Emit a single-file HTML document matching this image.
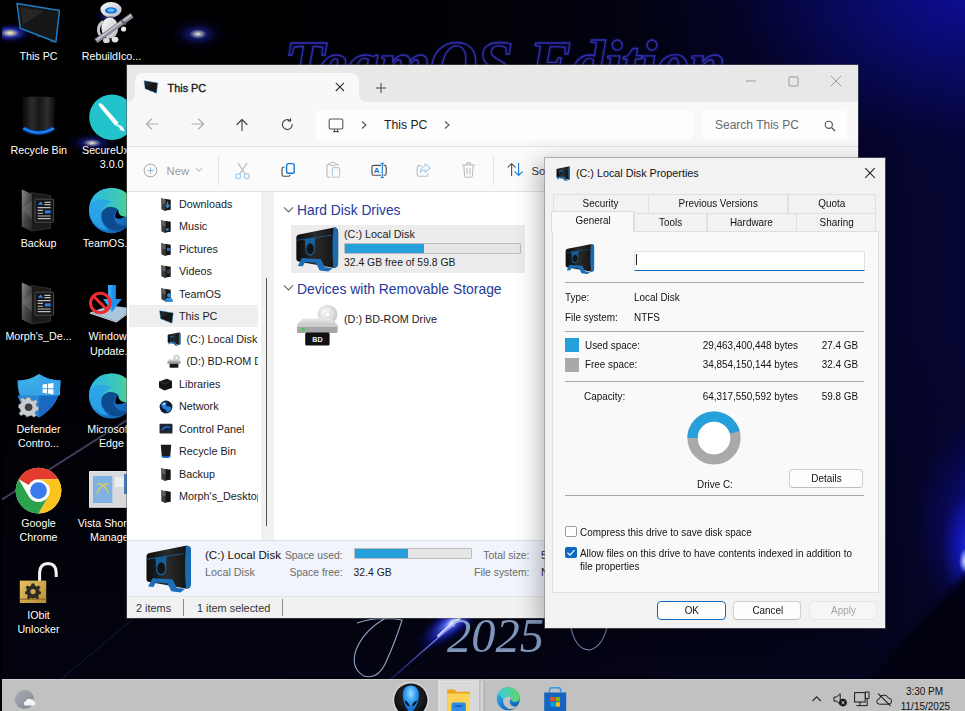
<!DOCTYPE html>
<html lang="en">
<head>
<meta charset="utf-8">
<title>Desktop - This PC - Local Disk Properties</title>
<style>
*{box-sizing:border-box;margin:0;padding:0}
html,body{width:965px;height:711px;overflow:hidden;background:#000}
body{position:relative;font-family:"Liberation Sans",sans-serif;font-size:10.8px;color:#1b1b1b}
.abs{position:absolute}
#wall{position:absolute;left:0;top:0;width:965px;height:711px;overflow:hidden;
 background:
  radial-gradient(ellipse 7px 13px at 966px 561px, rgba(235,240,255,1) 0, rgba(150,170,255,.8) 50%, rgba(60,80,255,0) 100%),
  radial-gradient(ellipse 30px 56px at 972px 548px, rgba(40,55,250,.9) 0, rgba(25,30,220,.6) 45%, rgba(20,20,200,0) 100%),
  radial-gradient(ellipse 92px 140px at 985px 525px, rgba(16,16,185,.85) 0, rgba(10,10,125,.5) 45%, rgba(4,4,60,.18) 75%, rgba(0,0,40,0) 100%),
  radial-gradient(ellipse 340px 210px at 975px -10px, rgba(14,14,160,.95) 0, rgba(10,10,110,.75) 40%, rgba(5,5,60,.35) 72%, rgba(0,0,0,0) 100%),
  linear-gradient(180deg, rgba(4,4,20,0) 0, rgba(4,4,20,0) 45%, rgba(5,5,24,.75) 100%),
  linear-gradient(90deg, #000 0, #010106 50%, #03031a 78%, #060634 100%);
}
/* ---------- desktop icons ---------- */
.dlabel{position:absolute;width:90px;text-align:center;color:#fff;font-size:10.7px;line-height:14.2px;white-space:nowrap;
 text-shadow:0 1px 2px #000,0 0 2px #000,1px 1px 1px #000}
/* ---------- taskbar ---------- */
#taskbar{position:absolute;left:2px;top:679px;width:963px;height:40px;background:#c1c1c1;border-top:1px solid #cfcfcf}
/* ---------- explorer ---------- */
#exp{position:absolute;left:127px;top:65px;width:731px;height:553.2px;background:#fff;overflow:hidden;box-shadow:0 0 0 1px rgba(90,90,90,.55)}
#exp .tabstrip{position:absolute;left:0;top:0;width:731px;height:37px;background:#e8e8e8}
#exp .tab{position:absolute;left:8px;top:8px;width:224px;height:30px;background:#f8f8f8;border-radius:7px 7px 0 0}
#exp .nav{position:absolute;left:0;top:37px;width:731px;height:45px;background:#f8f8f8;border-bottom:1px solid #e3e3e3}
#exp .addr{position:absolute;left:189px;top:8px;width:377px;height:30px;background:#fdfdfd;border-radius:4px}
#exp .search{position:absolute;left:575px;top:8px;width:145px;height:30px;background:#fdfdfd;border-radius:4px}
#exp .cmd{position:absolute;left:0;top:82px;width:731px;height:45px;background:#fbfbfb;border-bottom:1px solid #e3e3e3}
#exp .side{position:absolute;left:0;top:127px;width:133.5px;height:348px;background:#fff;overflow:hidden}
#exp .gutter{position:absolute;left:133.5px;top:127px;width:13.7px;height:348px;background:#f1f1f1;z-index:2}
#exp .thumb{position:absolute;left:139px;top:213px;width:1.4px;height:248px;background:#555;z-index:3}
#exp .main{position:absolute;left:146px;top:127px;width:585px;height:348px;background:#fff}
#exp .details{position:absolute;left:0;top:475px;width:731px;height:57px;background:#f1f4fb;border-top:1px solid #d8e1f0;border-bottom:1px solid #e4e6ea}
#exp .status{position:absolute;left:0;top:532px;width:731px;height:22px;background:#f1f1f1}
.navrow{position:absolute;left:0;width:133.5px;height:22.5px;line-height:22.5px;white-space:nowrap;font-size:10.8px}
.navrow span{position:absolute;left:52px;top:0}
.navrow.sub span{left:59.5px}
.gray{color:#6b6b6b}
/* ---------- dialog ---------- */
#dlg{position:absolute;left:544.5px;top:157.5px;width:340px;height:470px;background:#f2f2f2;font-size:9.9px;color:#111;
 box-shadow:0 0 0 1px rgba(120,120,120,.5),-6px 4px 22px rgba(0,0,0,.28)}
#dlg .page{position:absolute;left:7px;top:73.5px;width:327px;height:362px;background:#f9f9f9;border:1px solid #dfdfdf}
#dlg .tabx{position:absolute;height:19px;background:#f2f2f2;border:1px solid #e0e0e0;border-bottom:none;text-align:center;line-height:17.5px}
#dlg .tabsel{position:absolute;background:#f9f9f9;border:1px solid #dcdcdc;border-bottom:none;text-align:center}
#dlg .sep{position:absolute;left:20px;width:299px;height:1px;background:#a8a8a8}
#dlg .t{position:absolute;white-space:nowrap;line-height:12px;margin-top:-.5px;font-size:10.8px;transform:scaleX(.917);transform-origin:0 50%}
#dlg .sx{display:inline-block;font-size:10.8px;transform:scaleX(.917);transform-origin:50% 50%}
#dlg .r{text-align:right;transform-origin:100% 50%}
#dlg .btn{position:absolute;top:443.5px;height:19px;width:68px;border:1px solid #cfcfcf;border-bottom-color:#bdbdbd;border-radius:4px;background:#fdfdfd;text-align:center;line-height:17.5px;font-size:10.2px}
</style>
</head>
<body>
<div id="wall">
<div class="abs" style="left:-14px;top:22px;width:48px;height:22px;background:radial-gradient(ellipse 50% 50% at 50% 50%,rgba(255,255,225,.95) 0,rgba(255,255,230,.75) 13%,rgba(50,60,230,.7) 38%,rgba(10,10,120,.3) 70%,rgba(0,0,0,0) 100%)"></div>
<div class="abs" style="left:169px;top:18px;width:58px;height:32px;background:radial-gradient(ellipse 50% 50% at 50% 50%,rgba(255,255,230,.95) 0,rgba(235,238,255,.7) 9%,rgba(30,40,190,.5) 30%,rgba(10,10,90,.25) 62%,rgba(0,0,0,0) 100%)"></div>
<div class="abs" style="left:64px;top:131px;width:56px;height:24px;background:radial-gradient(ellipse 50% 50% at 50% 50%,rgba(255,255,240,.95) 0,rgba(235,238,255,.7) 10%,rgba(30,40,190,.5) 32%,rgba(10,10,90,.25) 62%,rgba(0,0,0,0) 100%)"></div>
<div class="abs" style="left:94px;top:10px;width:28px;height:14px;background:radial-gradient(ellipse 50% 50% at 50% 50%,rgba(80,90,240,.55) 0,rgba(10,10,120,.25) 60%,rgba(0,0,0,0) 100%)"></div>
<div class="abs" style="left:284px;top:31px;font-family:'Liberation Serif',serif;font-style:italic;font-weight:bold;font-size:67px;line-height:67px;letter-spacing:-1.2px;white-space:nowrap;color:transparent;-webkit-text-stroke:1.3px #3030b0;filter:drop-shadow(0 0 1.2px rgba(50,50,220,.55))">TeamOS Edition</div>
<svg class="abs" style="left:0;top:600px" width="965" height="90" viewBox="0 600 965 90">
 <defs>
  <linearGradient id="gstreak" x1="1" y1="0" x2="0" y2="1"><stop offset="0" stop-color="#fff"/><stop offset=".25" stop-color="#8a90ff"/><stop offset="1" stop-color="#2a2ab0" stop-opacity=".5"/></linearGradient>
  <radialGradient id="gglow"><stop offset="0" stop-color="#e8ecff"/><stop offset=".2" stop-color="#5a6cff" stop-opacity=".9"/><stop offset=".55" stop-color="#1a22c8" stop-opacity=".55"/><stop offset="1" stop-color="#000040" stop-opacity="0"/></radialGradient>
 </defs>
 <ellipse cx="452" cy="622" rx="46" ry="17" fill="url(#gglow)" transform="rotate(-38 452 622)"/>
 <path d="M463,616 L391,679" stroke="url(#gstreak)" stroke-width="1.6" fill="none"/>
 <path d="M462,616 Q450,624 438,636" stroke="#eef0ff" stroke-width="1.8" fill="none" opacity=".85" stroke-linecap="round"/>
 <path d="M357,623 Q378,616 402,620 Q396,640 386,662 Q378,680 364,676 Q350,668 356,650 Q364,630 386,618" stroke="#9fb4d8" stroke-width="1.1" fill="none" opacity=".9"/>
 <path d="M570,622 Q574,650 590,650 Q604,646 608,622" stroke="#8fa6cf" stroke-width="1.1" fill="none" opacity=".85"/>
 <path d="M52,687 L140,613" stroke="#15154a" stroke-width="1" fill="none"/>
 <text x="447" y="652" font-family="Liberation Serif,serif" font-style="italic" font-size="48.5" fill="#9dbbe4" opacity=".8">2025</text>
</svg>
<svg class="abs" style="left:0;top:300px" width="260" height="260" viewBox="0 300 260 260"><path d="M0,500.8 L128,419.5" stroke="#2c2c50" stroke-width="3" opacity=".5" fill="none"/><path d="M0,500.8 L128,419.5" stroke="#8c8cac" stroke-width="1" opacity=".6" fill="none"/></svg>

<svg class="abs" style="left:820px;top:540px" width="145" height="140" viewBox="820 540 145 140"><defs><filter id="fb" x="-20%" y="-20%" width="140%" height="140%"><feGaussianBlur stdDeviation="3"/></filter></defs><polygon points="972,566 972,690 860,690 878,672" fill="#02020b" opacity=".93" filter="url(#fb)"/></svg>

</div>

<svg class="abs" style="left:0;top:0" width="142" height="640" viewBox="0 0 142 640">
 <defs>
  <linearGradient id="gbin" x1="0" y1="0" x2="1" y2="0"><stop offset="0" stop-color="#050505"/><stop offset=".3" stop-color="#2c2c2c"/><stop offset=".5" stop-color="#161616"/><stop offset=".75" stop-color="#2e2e2e"/><stop offset="1" stop-color="#060606"/></linearGradient>
  <linearGradient id="gfold" x1="0" y1="0" x2="1" y2="1"><stop offset="0" stop-color="#8a8a8a"/><stop offset=".5" stop-color="#4a4a4a"/><stop offset="1" stop-color="#262626"/></linearGradient>
  <linearGradient id="gedgeA" x1="0" y1="0" x2="1" y2="1"><stop offset="0" stop-color="#36c3f2"/><stop offset=".5" stop-color="#1d84dc"/><stop offset="1" stop-color="#0b4f9a"/></linearGradient>
  <linearGradient id="gedgeB" x1="0" y1="0" x2="1" y2="0"><stop offset="0" stop-color="#2cb9e6"/><stop offset=".7" stop-color="#41c9b0"/><stop offset="1" stop-color="#63d75e"/></linearGradient>
  <linearGradient id="grobot" x1="0" y1="0" x2="1" y2="1"><stop offset="0" stop-color="#ffffff"/><stop offset="1" stop-color="#b6b8bc"/></linearGradient>
  <linearGradient id="gshieldL" x1="0" y1="0" x2="0" y2="1"><stop offset="0" stop-color="#3fb4ec"/><stop offset="1" stop-color="#2a8fd8"/></linearGradient>
  <linearGradient id="ggold" x1="0" y1="0" x2="1" y2="1"><stop offset="0" stop-color="#e6c067"/><stop offset="1" stop-color="#b98d32"/></linearGradient>
  <g id="dfolder">
   <path d="M31,3.5 L50.5,6.5 L50.5,39.5 L31,42 Z" fill="#1b1b1b" stroke="#3a3a3a" stroke-width=".7"/>
   <path d="M21.8,0.6 L31.8,5 L31.8,42.6 L21.8,37.6 Z" fill="url(#gfold)"/>
   <path d="M21.8,20 L31.8,12 L31.8,30 Z" fill="#9a9a9a" opacity=".25"/>
   <rect x="35" y="10.2" width="18.6" height="23" rx="1" fill="#161616" stroke="#5a5a5a" stroke-width=".8"/>
   <path d="M38,15.8 L40.6,12.4 L43.2,15.8 Z" fill="#3a8de6"/>
   <path d="M44.4,13.4 H50.6 M44.4,15.6 H50.6 M37.6,18.6 H50.6 M37.6,21.4 H43 M37.6,24.2 H43 M37.6,27 H50.6 M37.6,29.6 H50.6" stroke="#bdbdbd" stroke-width="1.1"/>
   <rect x="44.8" y="21.4" width="5.8" height="3" fill="#2f7fe0"/>
  </g>
  <g id="dedge">
   <circle cx="0" cy="0" r="22.6" fill="url(#gedgeA)"/>
   <path d="M-21.8,-6 Q-17.6,-22 0,-22.6 Q18,-22.4 22.2,-4.4 Q23.4,5.6 12.6,6.4 Q4,6 6,-1.2 Q-4.6,-6.6 -10,2.4 Q-16,-11 -21.8,-6 Z" fill="url(#gedgeB)"/>
   <path d="M-21.8,-6 Q-12,-15 0,-8.6 Q-8,-5.6 -10.2,2.6 Q-12,12 -3,19.6 Q-14,19 -19.6,8.6 Q-23.6,1.6 -21.8,-6 Z" fill="#2aa5e6" opacity=".85"/>
   <path d="M6.4,-1.4 Q-3.4,-7.6 -9.8,1.6 Q-12.2,12.4 -1.2,19 Q8.6,22.6 17.2,15 Q5.8,17 2.8,8.4 Q2,2.6 6.4,-1.4 Z" fill="#0d4a8e"/>
   <path d="M6.6,-1.2 Q3,2.6 4,7.4 Q8,9.6 14,6 Q7,6.4 6.6,-1.2 Z" fill="#000" />
  </g>
 </defs>
 <!-- This PC -->
 <use href="#mon" x="14" y="1" width="46" height="44"/>
 <!-- robot -->
 <g>
  <ellipse cx="111" cy="9.6" rx="10.6" ry="7.6" fill="url(#grobot)"/>
  <ellipse cx="111" cy="10.4" rx="6" ry="3.2" fill="#1273e0"/><ellipse cx="111" cy="10.2" rx="3.4" ry="1.6" fill="#59c2ff"/>
  <rect x="108.4" y="16.4" width="5" height="3" fill="#5a5d66"/>
  <ellipse cx="109.8" cy="28" rx="8.4" ry="10.6" fill="url(#grobot)"/>
  <path d="M102.4,22 Q96.4,27 99.4,34" stroke="#c4c6ca" stroke-width="3" fill="none" stroke-linecap="round"/>
  <ellipse cx="106.4" cy="40.4" rx="3.4" ry="2.6" fill="#d6d8dc"/><ellipse cx="115" cy="39.6" rx="3.4" ry="2.8" fill="#e4e6e9"/>
  <path d="M96,41 L132,15.4" stroke="#8c8c98" stroke-width="5.2" stroke-linecap="butt"/>
  <path d="M96.6,39.8 L131.4,14.8" stroke="#c9c9d4" stroke-width="1.6"/>
  <path d="M121.4,20.4 L126,24.6" stroke="#5b5b66" stroke-width="2"/>
  <circle cx="123.6" cy="29" r="2.6" fill="#e8e9ec"/>
 </g>
 <!-- Recycle bin -->
 <path d="M21.8,97.6 Q38.8,95.4 55.9,97.6 L53.7,129.6 Q38.6,136.2 23.4,129.6 Z" fill="url(#gbin)"/>
 <path d="M23.6,128.4 Q38.6,137.4 53.6,128.4" stroke="#0a3c8c" stroke-width="5" fill="none" opacity=".75"/>
 <path d="M24,128.6 Q38.6,136.8 53.2,128.6" stroke="#1789ff" stroke-width="2.3" fill="none" stroke-linecap="round"/>
 <!-- SecureUx -->
 <circle cx="112" cy="117.2" r="22.8" fill="#22c3cb"/>
 <path d="M99,103.2 Q100.8,102.8 102.6,104.6 L118.6,122.8 L115.4,125.8 L99.6,106.8 Q98,104.6 99,103.2 Z" fill="#fff"/>
 <path d="M118.2,124.8 Q123.4,125.4 124.6,131.4 Q119,131 118.2,124.8 Z" fill="#fff"/>
 <path d="M116.4,124.4 L118.8,126.2" stroke="#e9f7f8" stroke-width="2"/>
 <!-- Backup folder -->
 <use href="#dfolder" x="0" y="189"/>
 <!-- TeamOS edge -->
 <use href="#dedge" x="111.5" y="210.6"/>
 <!-- Morph's folder -->
 <use href="#dfolder" x="0" y="282"/>
 <!-- Windows Update blocker -->
 <path d="M89.8,312.4 L110,305.4 L134,308.4 L116.4,321.4 Z" fill="#a9c5dc"/>
 <path d="M89.8,312.4 L116.4,321.4 L134,308.4 L134,309.6 L116.4,322.6 L89.8,313.6 Z" fill="#dcecf8"/>
 <path d="M108,285 H115.8 V299 H121.8 L112,312 L103.3,299 H108 Z" fill="#1e90ea"/><path d="M108,285 H111.4 V299 L112,312 L103.3,299 H108 Z" fill="#35a8f4"/>
 <circle cx="100.3" cy="303" r="9.8" fill="none" stroke="#ee2a32" stroke-width="3"/>
 <path d="M93.4,296 L107.2,310" stroke="#ee2a32" stroke-width="3"/>
 <!-- Defender -->
 <path d="M39,374 Q48,380 60.4,380.6 Q61,405 39,417.4 Q17,405 17.6,380.6 Q30,380 39,374 Z" fill="url(#gshieldL)"/>
 <path d="M39,374 Q48,380 60.4,380.6 Q61,405 39,417.4 Z" fill="#1868c4"/>
 <path d="M39,374 Q48,380 60.4,380.6 L60,395.6 H39 Z" fill="#3aa4ea"/>
 <path d="M17.7,395.6 H39 V417.4 Q19,406 17.7,395.6 Z" fill="#2386d6"/>
 <path d="M42.6,384.6 L47,384 V388.2 H42.6 Z M48,383.8 L53.4,383 V388.2 H48 Z M42.6,389.2 H47 V393.4 L42.6,392.8 Z M48,389.2 H53.4 V394.4 L48,393.6 Z" fill="#fff"/>
 <g transform="translate(28.6 407.2)">
  <path d="M-1.8,-10 H1.8 L2.4,-7.2 L4.6,-6.2 L7,-7.8 L9,-5.4 L7.4,-3 L8.2,-0.8 L10,-0.2 V3.2 L7.4,3.8 L6.4,6 L7.8,8.4 L5.2,10 L3,8.2 L0.6,8.8 L-1.8,10 L-3,8 L-5.4,7.4 L-7.8,8.6 L-9.6,6 L-7.8,4 L-8.6,1.6 L-10,0.6 V-2.6 L-8,-3.4 L-7,-5.6 L-8.4,-7.8 L-6,-9.6 L-4,-8 L-2.4,-8.4 Z" fill="#c9ccd1" stroke="#70747c" stroke-width=".6"/>
  <circle cx="0" cy="0" r="3.8" fill="#3b3e45"/>
 </g>
 <!-- Microsoft Edge -->
 <use href="#dedge" x="111.5" y="396"/>
 <!-- Chrome -->
 <g transform="translate(38.5 490.6)">
  <circle cx="0" cy="0" r="22.8" fill="#fff"/>
  <path d="M-19.75,-11.4 A22.8,22.8 0 0 1 19.75,-11.4 L0,-11.4 A11.4,11.4 0 0 0 -9.87,-5.7 Z" fill="#e33b2e"/>
  <path d="M19.75,-11.4 A22.8,22.8 0 0 1 0,22.8 L9.87,5.7 A11.4,11.4 0 0 0 9.87,-5.7 L0,-11.4 Z" fill="#fcc31e"/>
  <path d="M0,22.8 A22.8,22.8 0 0 1 -19.75,-11.4 L-9.87,5.7 A11.4,11.4 0 0 0 9.87,5.7 Z" fill="#2ba24c"/>
  <circle cx="0" cy="0" r="10.6" fill="#fff"/>
  <circle cx="0" cy="0" r="8.4" fill="#3a7cec"/>
 </g>
 <!-- Vista shortcut manager -->
 <rect x="89.6" y="471.6" width="50" height="35.6" fill="#d7d9dc" stroke="#f2f2f2" stroke-width="1"/>
 <rect x="93" y="476" width="19.4" height="27" fill="#7fb1e3"/>
 <path d="M97,484 Q103,481.6 108.4,493 M108.6,483.6 Q101,484 96.6,493.4" stroke="#e7d34a" stroke-width="1.2" fill="none"/>
 <rect x="115" y="477" width="12" height="10" fill="#eceef0"/>
 <rect x="124" y="474" width="4" height="20" fill="#3c78c8"/>
 <!-- IObit -->
 <path d="M39.6,582 V572.4 Q40,563.6 48,563.4 Q56,563.6 56.2,572.4 V577" stroke="#f4f4f4" stroke-width="3" fill="none"/>
 <rect x="19.8" y="580.6" width="26.4" height="22.4" fill="url(#ggold)"/>
 <rect x="19.8" y="598.6" width="26.4" height="1.2" fill="#8c6a22"/>
 <g transform="translate(33 591.6)">
  <path d="M-1.4,-7.6 H1.4 L2,-5.4 L3.8,-4.6 L5.8,-5.8 L7.4,-3.8 L6,-2 L6.6,0 L8,0.6 V2.6 L6,3.2 L5.2,5 L6.2,6.8 L4,8 L2.4,6.6 L0,7.2 L-2.4,6.6 L-4,8 L-6.2,6.8 L-5.2,5 L-6,3.2 L-8,2.6 V0.6 L-6.6,0 L-6,-2 L-7.4,-3.8 L-5.8,-5.8 L-3.8,-4.6 L-2,-5.4 Z" fill="#2e2a22" transform="translate(0 -0.4)"/>
  <circle cx="0" cy="0" r="2.6" fill="#d0a84f"/>
 </g>
</svg>
<div class="dlabel" style="left:-6.5px;top:48.9px">This PC</div>
<div class="dlabel" style="left:66.5px;top:48.9px">RebuildIco...</div>
<div class="dlabel" style="left:-6.2px;top:143.2px">Recycle Bin</div>
<div class="dlabel" style="left:82px;top:143.2px;text-align:left">SecureUxTh...</div>
<div class="dlabel" style="left:66.7px;top:157px">3.0.0</div>
<div class="dlabel" style="left:-6.5px;top:236px">Backup</div>
<div class="dlabel" style="left:82.7px;top:236px;text-align:left">TeamOS.site</div>
<div class="dlabel" style="left:-6.5px;top:329px">Morph's_De...</div>
<div class="dlabel" style="left:88.6px;top:329px;text-align:left">Windows</div>
<div class="dlabel" style="left:90px;top:343.6px;text-align:left">Update...</div>
<div class="dlabel" style="left:-6.5px;top:421.9px">Defender</div>
<div class="dlabel" style="left:-6.5px;top:436.2px">Contro...</div>
<div class="dlabel" style="left:87.3px;top:421.9px;text-align:left">Microsoft</div>
<div class="dlabel" style="left:66.4px;top:436.2px">Edge</div>
<div class="dlabel" style="left:-6.5px;top:515.6px">Google</div>
<div class="dlabel" style="left:-6.5px;top:529.7px">Chrome</div>
<div class="dlabel" style="left:77.7px;top:515.6px;text-align:left">Vista Shortcut</div>
<div class="dlabel" style="left:90px;top:529.7px;text-align:left">Manager</div>
<div class="dlabel" style="left:-6.5px;top:608.3px">IObit</div>
<div class="dlabel" style="left:-6.5px;top:622.4px">Unlocker</div>


<div id="exp">
<svg width="0" height="0" style="position:absolute">
 <defs>
  <linearGradient id="gDrv" x1="0" y1="0" x2="1" y2="0"><stop offset="0" stop-color="#0c0c0c"/><stop offset=".45" stop-color="#2a2a2a"/><stop offset="1" stop-color="#101010"/></linearGradient>
  <symbol id="drive" viewBox="5 3 46 49">
   <path d="M6,15.5 Q6,12.6 9,12 L45,4.8 Q50.5,4 50.5,10 L50.5,42 Q50.5,48.3 45,47.5 L9,41 Q6,40.5 6,38 Z" fill="url(#gDrv)"/>
   <path d="M45.5,4.7 Q50.5,4 50.5,10 L50.5,42 Q50.5,48.3 45.5,47.6 Q43.5,26 45.5,4.7 Z" fill="#1a6cb2"/>
   <path d="M6,17.8 L43.6,12.2 L43.6,13 L6,18.7 Z" fill="#175f9a"/>
   <path d="M14.6,17 L26.4,15.2 Q25.5,19 25.8,26 Q25.8,34.4 20.6,34.6 Q15.3,34.4 15.5,26 Q15.6,20 14.6,17 Z" fill="#15609c"/>
   <ellipse cx="20.7" cy="27.2" rx="3.9" ry="5.9" fill="#141414"/>
   <path d="M7.6,45.6 L12,37.2 L32,38.3 L36.2,46.8 L44.5,48 L40,51.5 L30.8,50.3 L26.8,42.2 L15.2,41.4 L13,46 Z" fill="#1b6fb8"/>
  </symbol>
  <symbol id="mon" viewBox="0 0 46 44">
   <path d="M30,34 L37.5,42 L40,41.2 L33,33 Z M22,32 L23,36.5 L25.5,36.5 L25,32Z" fill="#2b2b2b"/>
   <path d="M3,2.6 L45.5,9.4 L41.9,41 L6.3,27.3 Z" fill="#161616" stroke="#1a7cc4" stroke-width="1.5" stroke-linejoin="round"/>
   <path d="M6,6 L30,10 L9,24 Z" fill="#3a3a3a" opacity=".45"/>
  </symbol>
  <symbol id="fold" viewBox="0 0 14 16">
   <path d="M5,1.5 L12,2.6 L12,14 L5,15 Z" fill="#151515"/>
   <path d="M1.5,0.8 L6.2,2.6 L6.2,15.6 L1.5,13.4 Z" fill="#3a3a3a"/>
   <path d="M1.5,0.8 L6.2,2.6 L6.2,8 L1.5,6.5 Z" fill="#5e5e5e"/>
  </symbol>
 </defs>
</svg>
<div class="tabstrip">
 <div class="tab"></div>
 <div class="abs" style="left:232px;top:30px;width:7px;height:7px;background:radial-gradient(circle at 100% 0,rgba(248,248,248,0) 6.4px,#f8f8f8 7px)"></div>
 <div class="abs" style="left:1px;top:30px;width:7px;height:7px;background:radial-gradient(circle at 0 0,rgba(248,248,248,0) 6.4px,#f8f8f8 7px)"></div>
 <svg class="abs" style="left:15px;top:15px" width="17" height="14"><use href="#mon" width="17" height="14"/></svg>
 <div class="abs" style="left:40.5px;top:16px;font-size:10.9px;line-height:14px;color:#1a1a1a;-webkit-text-stroke:.35px #1a1a1a">This PC</div>
 <svg class="abs" style="left:207px;top:16px" width="12" height="12" viewBox="0 0 12 12"><path d="M1.8,1.8 L10,10 M10,1.8 L1.8,10" stroke="#333" stroke-width="1.1" fill="none"/></svg>
 <svg class="abs" style="left:248px;top:16.5px" width="12" height="12" viewBox="0 0 12 12"><path d="M6,1 V11 M1,6 H11" stroke="#444" stroke-width="1" fill="none"/></svg>
 <svg class="abs" style="left:618px;top:10px" width="12" height="12" viewBox="0 0 12 12"><path d="M1,6 H11" stroke="#9a9a9a" stroke-width="1" fill="none"/></svg>
 <svg class="abs" style="left:660.5px;top:10.5px" width="11" height="11" viewBox="0 0 11 11"><rect x="1" y="1" width="9" height="9" rx=".4" stroke="#9a9a9a" stroke-width="1" fill="none"/></svg>
 <svg class="abs" style="left:703px;top:10px" width="12" height="12" viewBox="0 0 12 12"><path d="M1,1 L11,11 M11,1 L1,11" stroke="#9a9a9a" stroke-width="1" fill="none"/></svg>
</div>
<div class="nav">
 <svg class="abs" style="left:18px;top:16px" width="14" height="12" viewBox="0 0 14 12"><path d="M13,6 H1.5 M6.5,1 L1.5,6 L6.5,11" stroke="#ababab" stroke-width="1.1" fill="none" stroke-linecap="round" stroke-linejoin="round"/></svg>
 <svg class="abs" style="left:63.5px;top:16px" width="14" height="12" viewBox="0 0 14 12"><path d="M1,6 H12.5 M7.5,1 L12.5,6 L7.5,11" stroke="#ababab" stroke-width="1.1" fill="none" stroke-linecap="round" stroke-linejoin="round"/></svg>
 <svg class="abs" style="left:109px;top:15.5px" width="12" height="13" viewBox="0 0 12 13"><path d="M6,12.5 V1.5 M1,6.5 L6,1.5 L11,6.5" stroke="#454545" stroke-width="1.15" fill="none" stroke-linecap="round" stroke-linejoin="round"/></svg>
 <svg class="abs" style="left:154px;top:15.5px" width="13" height="13" viewBox="0 0 13 13"><path d="M11.2,6.5 A4.9,4.9 0 1 1 9.2,2.6 M9.6,0.6 V3 H7.2" stroke="#454545" stroke-width="1.1" fill="none" stroke-linecap="round" stroke-linejoin="round"/></svg>
 <div class="addr">
  <svg class="abs" style="left:12px;top:7.5px" width="16" height="15" viewBox="0 0 16 15"><rect x="1.2" y="1" width="13.6" height="10" rx="1.6" stroke="#555" stroke-width="1.1" fill="none"/><path d="M5,13.6 H11 M6.5,11 V13.6 M9.5,11 V13.6" stroke="#555" stroke-width="1.1" fill="none"/></svg>
  <svg class="abs" style="left:43.5px;top:10px" width="8" height="10" viewBox="0 0 8 10"><path d="M2,1.5 L6,5 L2,8.5" stroke="#555" stroke-width="1.1" fill="none"/></svg>
  <div class="abs" style="left:68px;top:7px;font-size:12.2px;line-height:16px;color:#222">This PC</div>
  <svg class="abs" style="left:126.5px;top:10px" width="8" height="10" viewBox="0 0 8 10"><path d="M2,1.5 L6,5 L2,8.5" stroke="#555" stroke-width="1.1" fill="none"/></svg>
 </div>
 <div class="search">
  <div class="abs" style="left:13px;top:7px;font-size:12px;line-height:16px;color:#6a6a6a;white-space:nowrap">Search This PC</div>
  <svg class="abs" style="left:122px;top:10px" width="12" height="12" viewBox="0 0 12 12"><circle cx="4.8" cy="4.8" r="3.6" stroke="#555" stroke-width="1.1" fill="none"/><path d="M7.5,7.5 L11,11" stroke="#555" stroke-width="1.2"/></svg>
 </div>
</div>
<div class="cmd">
 <svg class="abs" style="left:16px;top:15.5px" width="15" height="15" viewBox="0 0 15 15"><circle cx="7.5" cy="7.5" r="6.4" stroke="#a9a9a9" stroke-width="1" fill="none"/><path d="M7.5,4.3 V10.7 M4.3,7.5 H10.7" stroke="#8ab8e0" stroke-width="1"/></svg>
 <div class="abs" style="left:39.5px;top:17px;font-size:11.3px;line-height:14px;color:#9d9d9d">New</div>
 <svg class="abs" style="left:68px;top:20px" width="8" height="6" viewBox="0 0 8 6"><path d="M1,1.2 L4,4.2 L7,1.2" stroke="#a5a5a5" stroke-width="1" fill="none"/></svg>
 <div class="abs" style="left:90.5px;top:9px;width:1px;height:29px;background:#e4e4e4"></div>
 <!-- cut -->
 <svg class="abs" style="left:107px;top:14.5px" width="17" height="18" viewBox="0 0 17 18"><path d="M4,1 L11.5,12.5 M13,1 L5.5,12.5" stroke="#b5b5b5" stroke-width="1.1" fill="none"/><circle cx="4.2" cy="14.2" r="2.4" stroke="#9cc9ee" stroke-width="1.1" fill="none"/><circle cx="12.8" cy="14.2" r="2.4" stroke="#9cc9ee" stroke-width="1.1" fill="none"/></svg>
 <!-- copy -->
 <svg class="abs" style="left:152.5px;top:14.5px" width="17" height="17" viewBox="0 0 17 17"><path d="M4.6,5.2 H3.6 Q2,5.2 2,6.8 V12.6 Q2,14.2 3.6,14.2 H8.6 Q10.2,14.2 10.2,12.8" stroke="#505050" stroke-width="1.15" fill="none"/><rect x="6.6" y="1.6" width="7.6" height="9.6" rx="1.8" stroke="#1279d3" stroke-width="1.4" fill="none"/></svg>
 <!-- paste -->
 <svg class="abs" style="left:198px;top:14px" width="17" height="18" viewBox="0 0 17 18"><path d="M5,3.4 H3.4 Q2,3.4 2,4.8 V14.8 Q2,16.2 3.4,16.2 H5.6 M10.4,3.4 H12 Q13.4,3.4 13.4,4.8" stroke="#b9b9b9" stroke-width="1.1" fill="none"/><rect x="5" y="1.6" width="5.4" height="3" rx="1" stroke="#b9b9b9" stroke-width="1" fill="none"/><rect x="7.4" y="6.6" width="7.2" height="9.6" rx="1.4" stroke="#a6cff0" stroke-width="1.1" fill="none"/></svg>
 <!-- rename -->
 <svg class="abs" style="left:242.5px;top:14.5px" width="18" height="17" viewBox="0 0 18 17"><path d="M11,3.4 H3.6 Q2,3.4 2,5 V11.6 Q2,13.2 3.6,13.2 H11 M13.6,3.4 H14.6 Q16.2,3.4 16.2,5 V11.6 Q16.2,13.2 14.6,13.2 H13.6" stroke="#505050" stroke-width="1.15" fill="none"/><path d="M12.3,1.2 V15.6 M10.6,1 Q12.3,1 12.3,2.4 Q12.3,1 14,1 M10.6,15.8 Q12.3,15.8 12.3,14.4 Q12.3,15.8 14,15.8" stroke="#1279d3" stroke-width="1.1" fill="none"/><text x="3.7" y="11.3" font-family="Liberation Sans,sans-serif" font-size="8" font-weight="bold" fill="#1279d3">A</text></svg>
 <!-- share -->
 <svg class="abs" style="left:287.5px;top:14.5px" width="17" height="17" viewBox="0 0 17 17"><path d="M6.4,3.6 H4 Q2.2,3.6 2.2,5.4 V12.4 Q2.2,14.2 4,14.2 H11.2 Q13,14.2 13,12.4 V11.6" stroke="#bcbcbc" stroke-width="1.1" fill="none"/><path d="M10.2,1.6 L15.2,6 L10.2,10.4 V7.8 Q6.8,7.6 5.4,10.6 Q5.6,4.6 10.2,4.2 Z" stroke="#a6cff0" stroke-width="1.1" fill="none" stroke-linejoin="round"/></svg>
 <!-- delete -->
 <svg class="abs" style="left:333.5px;top:14px" width="15" height="18" viewBox="0 0 15 18"><path d="M1.4,4 H13.6 M5.2,4 Q5.2,1.6 7.5,1.6 Q9.8,1.6 9.8,4 M2.8,4 L3.6,14.8 Q3.7,16.2 5.1,16.2 H9.9 Q11.3,16.2 11.4,14.8 L12.2,4 M6,7.2 V13 M9,7.2 V13" stroke="#bdbdbd" stroke-width="1.1" fill="none" stroke-linecap="round"/></svg>
 <div class="abs" style="left:365.5px;top:9px;width:1px;height:29px;background:#e4e4e4"></div>
 <!-- sort -->
 <svg class="abs" style="left:380px;top:15px" width="17" height="15" viewBox="0 0 17 15"><path d="M4.6,13.6 V1.6 M1,5.2 L4.6,1.6 L8.2,5.2" stroke="#505050" stroke-width="1.1" fill="none" stroke-linecap="round" stroke-linejoin="round"/><path d="M11.6,1.4 V13.4 M8,9.8 L11.6,13.4 L15.2,9.8" stroke="#1279d3" stroke-width="1.1" fill="none" stroke-linecap="round" stroke-linejoin="round"/></svg>
 <div class="abs" style="left:404.5px;top:16.5px;font-size:11.3px;line-height:14px;color:#333">Sort</div>
</div>
<div class="side">
 <div class="abs" style="left:1.8px;top:113.3px;width:131.7px;height:22.2px;background:#efefef"></div>
 <div class="navrow" style="top:0.75px"><svg class="abs" style="left:32.5px;top:4px" width="12.5" height="15"><use href="#fold" width="12.5" height="15"/><path d="M7.6,4.5 V10 M5.8,8 L7.6,10.4 L9.4,8" stroke="#2d8fe0" stroke-width="1.3" fill="none"/></svg><span>Downloads</span></div>
 <div class="navrow" style="top:23.25px"><svg class="abs" style="left:32.5px;top:4px" width="12.5" height="15"><use href="#fold" width="12.5" height="15"/><circle cx="7.4" cy="10.6" r="1.5" fill="#2d7fd0"/></svg><span>Music</span></div>
 <div class="navrow" style="top:45.75px"><svg class="abs" style="left:32.5px;top:4px" width="12.5" height="15"><use href="#fold" width="12.5" height="15"/><rect x="7" y="6" width="3.6" height="3" fill="#2a6cb8"/></svg><span>Pictures</span></div>
 <div class="navrow" style="top:68.25px"><svg class="abs" style="left:32.5px;top:4px" width="12.5" height="15"><use href="#fold" width="12.5" height="15"/><rect x="7" y="5.5" width="3" height="4" fill="#23466e"/></svg><span>Videos</span></div>
 <div class="navrow" style="top:90.75px"><svg class="abs" style="left:32.5px;top:4px" width="14" height="16"><use href="#fold" width="12.5" height="15"/><circle cx="9" cy="8.2" r="1.9" fill="#2d8fe0"/><path d="M5,15 Q5.4,10.6 9,10.6 Q12.6,10.6 13,15 Z" fill="#2d8fe0"/></svg><span>TeamOS</span></div>
 <div class="navrow" style="top:113.25px"><svg class="abs" style="left:30.5px;top:4.5px" width="16" height="14"><use href="#mon" width="16" height="14"/></svg><span>This PC</span></div>
 <div class="navrow sub" style="top:135.75px"><svg class="abs" style="left:39.5px;top:4.5px" width="14" height="14"><use href="#drive" width="14" height="14"/></svg><span>(C:) Local Disk</span></div>
 <div class="navrow sub" style="top:158.25px"><svg class="abs" style="left:39.5px;top:4px" width="14" height="15" viewBox="0 0 14 15"><circle cx="9.6" cy="4" r="3.4" fill="#d4d6d8"/><circle cx="9.6" cy="4" r="1" fill="#fff"/><path d="M0.5,7.4 L2.2,5.6 H11.8 L13.5,7.4 V9.6 H0.5 Z" fill="#c9cacb"/><rect x="0.5" y="7.4" width="13" height="2.4" fill="#9c9d9e"/><rect x="2.6" y="9.8" width="8.8" height="4" rx=".8" fill="#1a1a1a"/><circle cx="2.4" cy="8.6" r=".7" fill="#35d045"/></svg><span>(D:) BD-ROM Drive</span></div>
 <div class="navrow" style="top:180.75px"><svg class="abs" style="left:31px;top:5px" width="15" height="13" viewBox="0 0 15 13"><path d="M1,3.6 L9,0.8 L14,3 V10 L6.4,12.4 L1,9.6 Z" fill="#141414"/><path d="M1,3.6 L6.4,5.8 L14,3" stroke="#3a3a3a" stroke-width=".8" fill="none"/></svg><span>Libraries</span></div>
 <div class="navrow" style="top:203.25px"><svg class="abs" style="left:31.5px;top:4.5px" width="14" height="14" viewBox="0 0 14 14"><circle cx="7" cy="7" r="6.4" fill="#0e1a30"/><path d="M2,4 Q5,1 8,2.4 Q6,5 8.4,6.4 Q11,6 12.6,8 Q11,12 7.6,12.6 Q8,9.6 5,9 Q2.6,8 2,4 Z" fill="#1f7fd6"/><circle cx="5" cy="4" r="1.3" fill="#9fd0ff"/></svg><span>Network</span></div>
 <div class="navrow" style="top:225.75px"><svg class="abs" style="left:31.5px;top:5.5px" width="14" height="12" viewBox="0 0 14 12"><rect x=".5" y=".8" width="13" height="9.8" rx="1" fill="#2a2a2e"/><rect x="1.8" y="2.2" width="10.4" height="6.6" fill="#15233c"/><path d="M3,7 Q6,2.6 11,4.4" stroke="#2a7fe0" stroke-width="1.3" fill="none"/></svg><span>Control Panel</span></div>
 <div class="navrow" style="top:248.25px"><svg class="abs" style="left:32.5px;top:4px" width="12" height="15" viewBox="0 0 12 15"><path d="M.8,.8 H11.2 L10.2,13 Q6,14.8 1.8,13 Z" fill="#1a1a1a"/><path d="M1.6,11.6 Q6,13.6 10.4,11.6 L10.2,13.2 Q6,15 1.8,13.2 Z" fill="#1c7de0"/></svg><span>Recycle Bin</span></div>
 <div class="navrow" style="top:270.75px"><svg class="abs" style="left:32.5px;top:4px" width="12.5" height="15"><use href="#fold" width="12.5" height="15"/></svg><span>Backup</span></div>
 <div class="navrow" style="top:293.25px"><svg class="abs" style="left:32.5px;top:4px" width="12.5" height="15"><use href="#fold" width="12.5" height="15"/></svg><span>Morph's_Desktop</span></div>
</div>
<div class="abs" style="left:131px;top:127px;width:2.5px;height:348px;background:#fff;z-index:2"></div>
<div class="gutter"></div>
<div class="thumb"></div>
<div class="main">
 <svg class="abs" style="left:9.5px;top:14px" width="11" height="8" viewBox="0 0 11 8"><path d="M1,1.4 L5.5,6 L10,1.4" stroke="#6a6a6a" stroke-width="1.1" fill="none"/></svg>
 <div class="abs" style="left:24px;top:10px;font-size:13.8px;line-height:18px;color:#25399b;white-space:nowrap">Hard Disk Drives</div>
 <div class="abs" style="left:17.5px;top:32.8px;width:234.5px;height:48.2px;background:#ececec"></div>
 <svg class="abs" style="left:21.5px;top:33.5px" width="44" height="46"><use href="#drive" width="44" height="46"/></svg>
 <div class="abs" style="left:71px;top:35px;line-height:14px;white-space:nowrap">(C:) Local Disk</div>
 <div class="abs" style="left:71px;top:50.5px;width:176.5px;height:11.5px;background:#e6e6e6;border:1px solid #bcbcbc;border-radius:1px"><div style="position:absolute;left:0;top:0;width:79px;height:9.5px;background:#26a0da"></div></div>
 <div class="abs" style="left:71px;top:64px;line-height:14px;white-space:nowrap;font-size:10.4px">32.4 GB free of 59.8 GB</div>
 <svg class="abs" style="left:9.5px;top:92px" width="11" height="8" viewBox="0 0 11 8"><path d="M1,1.4 L5.5,6 L10,1.4" stroke="#6a6a6a" stroke-width="1.1" fill="none"/></svg>
 <div class="abs" style="left:24px;top:87.6px;font-size:13.9px;line-height:18px;color:#25399b;white-space:nowrap">Devices with Removable Storage</div>
 <svg class="abs" style="left:23px;top:112px" width="42" height="43" viewBox="0 0 42 43">
  <defs><linearGradient id="gbd" x1="0" y1="0" x2="0" y2="1"><stop offset="0" stop-color="#e8e9ea"/><stop offset="1" stop-color="#a9aaac"/></linearGradient>
  <radialGradient id="gcd" cx=".4" cy=".4" r=".7"><stop offset="0" stop-color="#fff"/><stop offset=".6" stop-color="#d8dadc"/><stop offset="1" stop-color="#b9bcc0"/></radialGradient></defs>
  <circle cx="31.5" cy="10.5" r="9.8" fill="url(#gcd)"/><circle cx="31.5" cy="10.5" r="2.6" fill="#fff" stroke="#c4c6c8" stroke-width=".6"/>
  <path d="M1,21 L6.5,14.6 H36 L41.5,21 V27 H1 Z" fill="url(#gbd)"/>
  <rect x="1" y="20.6" width="40.5" height="8.4" rx="1" fill="#a6a7a9"/>
  <rect x="1" y="20.6" width="40.5" height="2" fill="#d6d7d8"/>
  <circle cx="7.2" cy="25.2" r="1.5" fill="#2fd243"/>
  <rect x="9.2" y="28.6" width="24.4" height="13" rx="1.6" fill="#111"/>
  <text x="21.4" y="38.4" text-anchor="middle" font-family="Liberation Sans,sans-serif" font-size="7.2" font-weight="bold" fill="#f2f2f2">BD</text>
 </svg>
 <div class="abs" style="left:71px;top:119.7px;line-height:14px;white-space:nowrap">(D:) BD-ROM Drive</div>
</div>
<div class="details">
 <svg class="abs" style="left:17.5px;top:3px" width="47" height="49"><use href="#drive" width="47" height="49"/></svg>
 <div class="abs" style="left:78px;top:6px;font-size:11.6px;line-height:15px;white-space:nowrap;color:#111">(C:) Local Disk</div>
 <div class="abs gray" style="left:78px;top:24px;line-height:14px;white-space:nowrap">Local Disk</div>
 <div class="abs gray" style="left:115.7px;width:100px;text-align:right;top:7.5px;line-height:14px;white-space:nowrap;font-size:10.4px">Space used:</div>
 <div class="abs gray" style="left:115.7px;width:100px;text-align:right;top:25px;line-height:14px;white-space:nowrap;font-size:10.4px">Space free:</div>
 <div class="abs" style="left:227.4px;top:6.8px;width:117.4px;height:11.7px;background:#e6e6e6;border:1px solid #bcbcbc;border-radius:1px"><div style="position:absolute;left:0;top:0;width:52.5px;height:9.7px;background:#26a0da"></div></div>
 <div class="abs" style="left:226.6px;top:25px;line-height:14px;white-space:nowrap;font-size:10.4px">32.4 GB</div>
 <div class="abs gray" style="left:302.5px;width:100px;text-align:right;top:7.5px;line-height:14px;white-space:nowrap;font-size:10.4px">Total size:</div>
 <div class="abs gray" style="left:302.5px;width:100px;text-align:right;top:25px;line-height:14px;white-space:nowrap;font-size:10.4px">File system:</div>
 <div class="abs" style="left:414px;top:7.5px;line-height:14px;white-space:nowrap;font-size:10.4px">59.8 GB</div>
 <div class="abs" style="left:414px;top:25px;line-height:14px;white-space:nowrap;font-size:10.4px">NTFS</div>
</div>
<div class="status">
 <div class="abs" style="left:9px;top:3.6px;line-height:14px;white-space:nowrap;font-size:10.9px;color:#333">2 items</div>
 <div class="abs" style="left:56.3px;top:1.7px;width:1.2px;height:17.6px;background:#8a8a8a"></div>
 <div class="abs" style="left:70px;top:3.6px;line-height:14px;white-space:nowrap;font-size:10.9px;color:#333">1 item selected</div>
 <div class="abs" style="left:154.8px;top:1.7px;width:1.2px;height:17.6px;background:#8a8a8a"></div>
</div>

</div>

<div id="dlg">
<svg class="abs" style="left:11px;top:8px" width="14.5" height="15"><use href="#drive" width="14.5" height="15"/></svg>
<div class="t" style="transform:none;left:31.5px;top:9.5px;font-size:10.77px;line-height:13px;color:#111">(C:) Local Disk Properties</div>
<svg class="abs" style="left:319.4px;top:9.3px" width="12" height="12" viewBox="0 0 12 12"><path d="M1.2,1.2 L10.8,10.8 M10.8,1.2 L1.2,10.8" stroke="#222" stroke-width="1.05" fill="none"/></svg>
<div class="tabx" style="left:8.5px;top:36px;width:95.5px"><span class="sx">Security</span></div>
<div class="tabx" style="left:103.5px;top:36px;width:140.3px"><span class="sx">Previous Versions</span></div>
<div class="tabx" style="left:243.3px;top:36px;width:88.7px"><span class="sx">Quota</span></div>
<div class="tabx" style="left:89.4px;top:55px;width:73.6px;line-height:17.5px"><span class="sx">Tools</span></div>
<div class="tabx" style="left:162.5px;top:55px;width:89.7px;line-height:17.5px"><span class="sx">Hardware</span></div>
<div class="tabx" style="left:251.7px;top:55px;width:80.3px;line-height:17.5px"><span class="sx">Sharing</span></div>
<div class="page"></div>
<div class="tabsel" style="left:6.9px;top:53px;width:83px;height:21.6px;line-height:17px"><span class="sx">General</span></div>
<svg class="abs" style="left:20.5px;top:85px" width="29.5" height="31.5"><use href="#drive" width="29.5" height="31.5"/></svg>
<div class="abs" style="left:89.2px;top:93px;width:231px;height:20.6px;background:#fff;border:1px solid #e2e2e2;border-bottom:1.6px solid #0a69c2;border-radius:2px 2px 0 0"></div>
<div class="abs" style="left:91.6px;top:96.8px;width:1px;height:10.8px;background:#222"></div>
<div class="sep" style="top:124.3px"></div>
<div class="t" style="left:20.5px;top:134.2px">Type:</div>
<div class="t" style="left:89.2px;top:134.2px">Local Disk</div>
<div class="t" style="left:20.5px;top:153.6px">File system:</div>
<div class="t" style="left:89.2px;top:153.6px">NTFS</div>
<div class="sep" style="top:173.6px"></div>
<div class="abs" style="left:20.3px;top:180.7px;width:14.2px;height:13.8px;background:#26a0da"></div>
<div class="t" style="left:40.3px;top:181.6px">Used space:</div>
<div class="t r" style="left:133.5px;width:120px;top:181.6px">29,463,400,448 bytes</div>
<div class="t r" style="left:253px;width:60px;top:181.6px">27.4 GB</div>
<div class="abs" style="left:20.3px;top:200.5px;width:14.2px;height:13.8px;background:#a9a9a9"></div>
<div class="t" style="left:40.3px;top:201.1px">Free space:</div>
<div class="t r" style="left:133.5px;width:120px;top:201.1px">34,854,150,144 bytes</div>
<div class="t r" style="left:253px;width:60px;top:201.1px">32.4 GB</div>
<div class="sep" style="top:223.8px"></div>
<div class="t" style="left:39.8px;top:232.6px">Capacity:</div>
<div class="t r" style="left:133.5px;width:120px;top:232.6px">64,317,550,592 bytes</div>
<div class="t r" style="left:253px;width:60px;top:232.6px">59.8 GB</div>
<svg class="abs" style="left:139.5px;top:250.2px" width="60" height="60" viewBox="-30 -30 60 60">
 <circle cx="0" cy="0" r="21.4" fill="none" stroke="#a9a9a9" stroke-width="10.4"/>
 <path d="M-21.4,0 A21.4,21.4 0 0 1 20.67,-5.54" fill="none" stroke="#26a0da" stroke-width="10.4"/>
 <circle cx="0" cy="0" r="16.2" fill="#fff"/>
</svg>
<div class="t" style="left:130.5px;width:80px;text-align:center;top:320.6px;transform-origin:50% 50%">Drive C:</div>
<div class="abs" style="left:244.9px;top:311.9px;width:74px;height:19px;border:1px solid #cfcfcf;border-bottom-color:#bdbdbd;border-radius:4px;background:#fdfdfd;text-align:center;line-height:17.5px;font-size:10.2px"><span class="sx">Details</span></div>
<div class="sep" style="top:337px"></div>
<div class="abs" style="left:20.3px;top:368.1px;width:11.8px;height:11.6px;background:#fdfdfd;border:1px solid #9c9c9c;border-radius:2px"></div>
<div class="t" style="left:35.2px;top:368.6px">Compress this drive to save disk space</div>
<div class="abs" style="left:20.3px;top:389.4px;width:11.8px;height:11.6px;background:#0a69c2;border-radius:2px"></div>
<svg class="abs" style="left:20.3px;top:389.4px" width="11.8" height="11.6" viewBox="0 0 12 12"><path d="M2.8,6.2 L5,8.4 L9.4,3.6" stroke="#fff" stroke-width="1.2" fill="none" stroke-linecap="round" stroke-linejoin="round"/></svg>
<div class="t" style="left:35.2px;top:389.6px;line-height:12.9px">Allow files on this drive to have contents indexed in addition to<br>file properties</div>
<div class="btn" style="left:112.7px;width:68.4px;border:1.5px solid #0a69c2;line-height:16.5px"><span class="sx">OK</span></div>
<div class="btn" style="left:188.9px;width:68px"><span class="sx">Cancel</span></div>
<div class="btn" style="left:264.9px;width:67.3px;color:#a3a3a3;background:#f6f6f6;border-color:#e6e6e6"><span class="sx">Apply</span></div>

</div>

<div id="taskbar">
<svg class="abs" style="left:0;top:0" width="963" height="40" viewBox="2 679 963 40">
 <defs>
  <radialGradient id="gorb" cx=".5" cy=".4" r=".6"><stop offset="0" stop-color="#30343c"/><stop offset=".7" stop-color="#14161a"/><stop offset="1" stop-color="#050506"/></radialGradient>
  <radialGradient id="galien" cx=".5" cy=".3" r=".8"><stop offset="0" stop-color="#9adcff"/><stop offset=".45" stop-color="#2b98f0"/><stop offset="1" stop-color="#0c56c0"/></radialGradient>
  <linearGradient id="gwx" x1="0" y1="0" x2="1" y2="1"><stop offset="0" stop-color="#a9adb6"/><stop offset="1" stop-color="#7f8591"/></linearGradient>
  <linearGradient id="gedge" x1="0" y1="0" x2="1" y2="1"><stop offset="0" stop-color="#35c1f1"/><stop offset=".5" stop-color="#1b7fd8"/><stop offset="1" stop-color="#0c59a4"/></linearGradient>
  <linearGradient id="gedge2" x1="0" y1="0" x2="1" y2="0"><stop offset="0" stop-color="#3bc8e8"/><stop offset="1" stop-color="#5fd765"/></linearGradient>
 </defs>
 <!-- weather -->
 <circle cx="24.5" cy="698.5" r="9.6" fill="url(#gwx)"/>
 <path d="M24.5,704.5 Q22.5,701 26,700 Q27.4,696.6 31,698.4 Q33.4,697.6 33.8,700.2 Q36,700.8 35.4,703 Q35,704.6 33,704.6 Z" fill="#f4f5f7"/>
 <!-- start orb -->
 <circle cx="410.8" cy="699" r="18.2" fill="#d4d6da"/>
 <circle cx="410.8" cy="699" r="16.6" fill="url(#gorb)"/>
 <path d="M410.8,684.6 Q419,684.8 418.8,694.4 Q418.2,703 413.6,709.6 Q410.8,712.6 408,709.6 Q403.4,703 402.8,694.4 Q402.6,684.8 410.8,684.6 Z" fill="url(#galien)"/>
 <path d="M404.6,699.4 Q408.2,700.4 409.8,705.4 Q405.6,704.6 404.6,699.4 Z M417,699.4 Q413.4,700.4 411.8,705.4 Q416,704.6 417,699.4 Z" fill="#06131f"/>
 <!-- active explorer button -->
 <rect x="438.8" y="680" width="40.4" height="40" fill="#d9d9d9" stroke="#e9e9e9" stroke-width="1"/>
 <rect x="479.6" y="680" width="4.2" height="40" fill="#d2d2d2"/>
 <rect x="483.6" y="680" width="1" height="40" fill="#a9a9a9"/>
 <rect x="479.3" y="680" width="1" height="40" fill="#adadad"/>
 <path d="M447.2,689.6 Q447.2,688.6 448.2,688.6 H454.6 L456.6,690.8 H469 Q470,690.8 470,691.8 V712 H447.2 Z" fill="#e9a520"/>
 <path d="M447.2,693.6 Q447.2,692.6 448.2,692.6 H469 Q470,692.6 470,693.6 V713 H447.2 Z" fill="#fcd354"/>
 <path d="M451.4,713 V703 Q451.4,701.4 453,701.4 H464.2 Q465.8,701.4 465.8,703 V713 Z" fill="#2d8be6"/>
 <rect x="454.8" y="704.2" width="7.6" height="1.8" rx=".9" fill="#1560b8"/>
 <!-- edge -->
 <circle cx="508.3" cy="697.8" r="11.5" fill="url(#gedge)"/>
 <path d="M497.2,694.6 Q499.4,686.6 508.3,686.3 Q517.6,686.4 519.7,695.6 Q520.2,700.6 514.8,701 Q510.4,700.8 511.4,697.2 Q506,694.4 503.2,699 Q500,692 497.2,694.6 Z" fill="url(#gedge2)"/>
 <path d="M511.6,697 Q506.6,693.8 503.4,698.4 Q502.2,704 507.8,707.4 Q512.8,709.2 517.2,705.4 Q511.4,706.4 509.8,702 Q509.4,699 511.6,697 Z" fill="#c1c1c1"/>
 <!-- store -->
 <path d="M549.4,691.6 V689.4 Q549.4,686.8 552,686.8 H558.2 Q560.8,686.8 560.8,689.4 V691.6" stroke="#2f9bea" stroke-width="1.5" fill="none"/>
 <path d="M544.2,691.4 H566.2 V709 Q566.2,711.4 563.8,711.4 H546.6 Q544.2,711.4 544.2,709 Z" fill="#1464c0"/>
 <rect x="550.4" y="696" width="4.4" height="4.4" fill="#f25022"/><rect x="555.6" y="696" width="4.4" height="4.4" fill="#7fba00"/>
 <rect x="550.4" y="701.2" width="4.4" height="4.4" fill="#00a4ef"/><rect x="555.6" y="701.2" width="4.4" height="4.4" fill="#ffb900"/>
 <!-- tray -->
 <path d="M812.6,700 L816.7,695.8 L820.8,700" stroke="#2a2a2a" stroke-width="1.1" fill="none"/>
 <path d="M834,696 H836.6 L840.2,692.8 V703.4 L836.6,700.2 H834 Z" stroke="#1a1a1a" stroke-width="1" fill="none" stroke-linejoin="round"/>
 <circle cx="843" cy="701.6" r="3.8" fill="#111"/>
 <path d="M841.4,700 L844.6,703.2 M844.6,700 L841.4,703.2" stroke="#fff" stroke-width=".9"/>
 <rect x="854.6" y="691.6" width="10.6" height="9.4" stroke="#1a1a1a" stroke-width="1" fill="none"/>
 <path d="M859.9,701 V704.4 M856.4,704.6 H867.4 M867.2,704.6 V697.6" stroke="#1a1a1a" stroke-width="1" fill="none"/>
 <rect x="865.4" y="691" width="3.6" height="6.4" stroke="#1a1a1a" stroke-width=".9" fill="#c1c1c1"/>
 <path d="M879.4,703.2 Q876.6,702.8 876.8,700.2 Q877,698 879.4,697.8 Q880,694 884,694 Q887.4,694 888.2,697 Q891.6,697.2 891.6,700.2 Q891.6,703.2 888.6,703.2 Z" stroke="#1a1a1a" stroke-width="1" fill="none"/>
 <path d="M878.2,692.6 L890.6,704.8" stroke="#1a1a1a" stroke-width="1.1"/>
 <text x="924.5" y="694.3" text-anchor="middle" font-family="Liberation Sans,sans-serif" font-size="10" fill="#111">3:30 PM</text>
 <text x="925.4" y="709.2" text-anchor="middle" font-family="Liberation Sans,sans-serif" font-size="10" fill="#111">11/15/2025</text>
</svg>

</div>
<div class="abs" style="left:0;top:0;width:2px;height:711px;background:#000"></div>
</body>
</html>
